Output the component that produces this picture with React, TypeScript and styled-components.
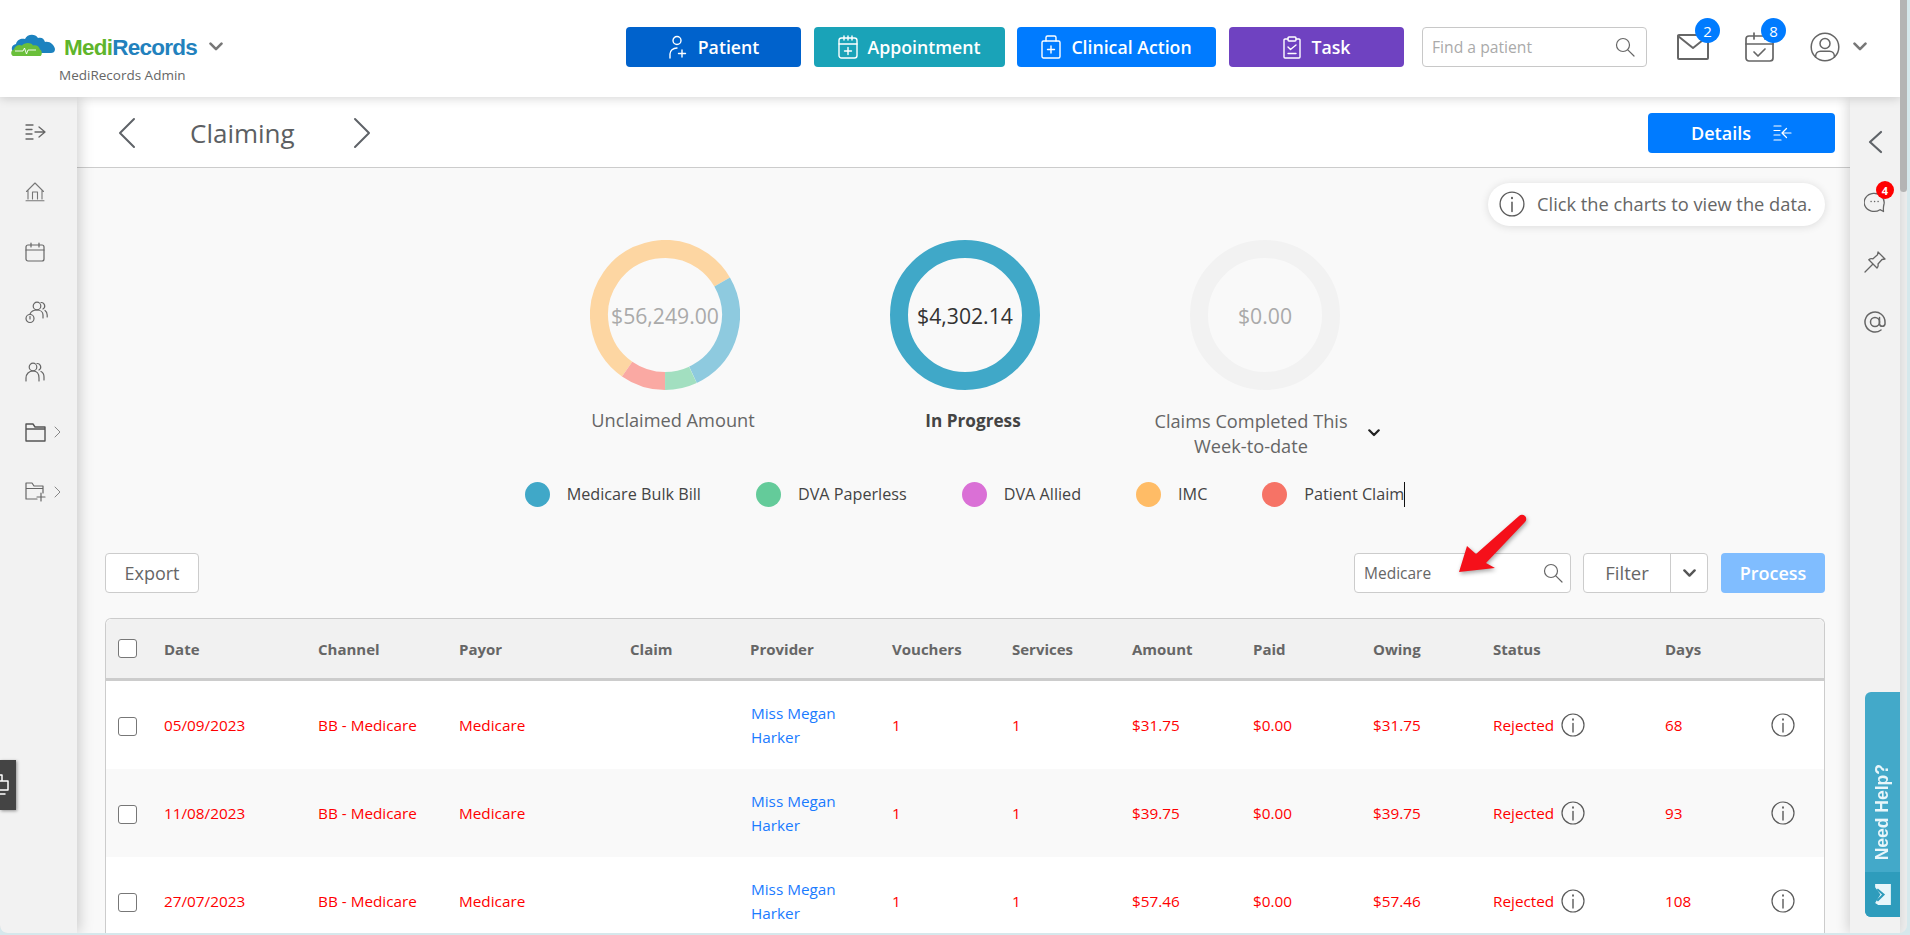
import styled, { createGlobalStyle } from "styled-components";
import { ReactNode } from "react";

const GlobalStyle = createGlobalStyle`
  html, body {
    margin: 0;
    padding: 0;
    height: 100%;
    overflow: hidden;
    background: #d6e8ec;
  }
  * { box-sizing: border-box; }
  #root { height: 100%; }
`;

const FONT = `"Open Sans", "Noto Sans", sans-serif`;

const Shell = styled.div`
  width: 1907px;
  height: 933px;
  display: flex;
  flex-direction: column;
  overflow: hidden;
  position: relative;
  background: #eeeeee;
  border-radius: 0 0 8px 8px;
  font-family: ${FONT};
  color: #666;
`;
const ScrollThumb = styled.div`
  position: absolute;
  top: 0;
  right: 0;
  width: 7px;
  height: 192px;
  background: #b4b4b4;
  border-radius: 0 0 4px 4px;
  z-index: 5;
`;
const Header = styled.header`
  width: 1900px;
  height: 97px;
  flex: none;
  display: flex;
  align-items: flex-start;
  padding-top: 27px;
  background: #fff;
  box-shadow: 0 1px 10px rgba(0, 0, 0, 0.18);
  position: relative;
  z-index: 3;
`;
const Brand = styled.div`
  width: 626px;
  flex: none;
  padding: 6px 0 0 11px;
  display: flex;
  flex-direction: column;
`;
const BrandTop = styled.div`
  display: flex;
  align-items: center;
  height: 24px;
`;
const BrandName = styled.div`
  margin: 5px 0 0 9px;
  font-family: "Liberation Sans", Arial, sans-serif;
  font-weight: 700;
  font-size: 22.500px;
  letter-spacing: -0.75px;
  line-height: 24px;
  color: #2281bd;
  span { color: #5fb52c; }
`;
const BrandCaret = styled.div`
  margin: 4px 0 0 12px;
`;
const BrandSub = styled.div`
  margin: 9px 0 0 48px;
  font-size: 13.500px;
  line-height: 18px;
  color: #666;
`;
const ActionButton = styled.button<{ $bg: string; $w: number }>`
  width: ${(p) => p.$w}px;
  height: 40px;
  margin-right: 12.500px;
  flex: none;
  display: flex;
  align-items: center;
  justify-content: center;
  gap: 10px;
  border: 0;
  border-radius: 4px;
  background: ${(p) => p.$bg};
  color: #fff;
  font-family: ${FONT};
  font-size: 17.700px;
  font-weight: 600;
`;
const FindBox = styled.div`
  width: 225px;
  height: 40px;
  margin-left: 6px;
  flex: none;
  display: flex;
  align-items: center;
  justify-content: space-between;
  padding: 0 11px 0 9px;
  background: #fff;
  border: 1px solid #c8c8c8;
  border-radius: 4px;
  font-size: 15.700px;
  color: #aaa;
`;
const HeaderIcon = styled.div<{ $ml: number }>`
  position: relative;
  margin-left: ${(p) => p.$ml}px;
  height: 40px;
  display: flex;
  align-items: center;
`;
const CountBadge = styled.span`
  position: absolute;
  width: 25px;
  height: 25px;
  top: -9px;
  right: -11px;
  border-radius: 50%;
  background: #007bff;
  color: #fff;
  font-size: 15px;
  font-weight: 500;
  display: flex;
  align-items: center;
  justify-content: center;
`;
const Body = styled.div`
  flex: 1;
  min-height: 0;
  display: flex;
  width: 1907px;
`;
const SideBar = styled.nav`
  width: 77px;
  flex: none;
  padding-top: 5px;
  background: #f2f2f2;
  box-shadow: 2px 0 14px rgba(0, 0, 0, 0.2);
  position: relative;
  z-index: 2;
`;
const SideItem = styled.div`
  height: 60px;
  display: flex;
  align-items: center;
  padding-left: 25px;
  gap: 8px;
`;
const RemoteTab = styled.div`
  position: absolute;
  left: 0;
  top: 663px;
  width: 16px;
  height: 50px;
  background: #444;
  box-shadow: 1px 1px 3px rgba(0, 0, 0, 0.4);
  overflow: hidden;
  display: flex;
  align-items: center;
`;
const Main = styled.main`
  width: 1773px;
  flex: none;
  min-height: 0;
  overflow: hidden;
  background: #f9f9f9;
`;
const PageBar = styled.div`
  height: 71px;
  display: flex;
  align-items: center;
  padding: 2px 15px 0 41px;
  background: #fff;
  border-bottom: 1px solid #ccc;
`;
const PageTitle = styled.h1`
  width: 217px;
  margin: 0;
  padding-left: 54px;
  font-size: 26px;
  font-weight: 400;
  color: #5c5f63;
`;
const DetailsButton = styled.button`
  width: 187px;
  height: 40px;
  margin-left: auto;
  display: flex;
  align-items: center;
  justify-content: center;
  gap: 22px;
  border: 0;
  border-radius: 4px;
  background: #007bff;
  color: #fff;
  font-family: ${FONT};
  font-size: 18px;
  font-weight: 600;
`;
const Content = styled.div`
  padding: 15px 25px 0 28px;
`;
const HintRow = styled.div`
  display: flex;
  justify-content: flex-end;
`;
const Hint = styled.div`
  width: 337px;
  height: 43px;
  display: flex;
  align-items: center;
  gap: 12px;
  padding: 0 0 2px 11px;
  border-radius: 22px;
  background: #fff;
  box-shadow: 0 1px 8px rgba(0, 0, 0, 0.12);
  font-size: 18.300px;
  white-space: nowrap;
  color: #666;
`;
const Charts = styled.div`
  display: flex;
  justify-content: center;
  margin-top: 14px;
`;
const ChartCol = styled.div`
  width: 300px;
  display: flex;
  flex-direction: column;
  align-items: center;
`;
const DonutWrap = styled.div`
  position: relative;
  width: 150px;
  height: 150px;
`;
const DonutValue = styled.div<{ $dark?: boolean }>`
  position: absolute;
  inset: 0;
  display: flex;
  align-items: center;
  justify-content: center;
  font-size: 21.200px;
  color: ${(p) => (p.$dark ? "#333" : "#aaa")};
`;
const ChartLabel = styled.div<{ $bold?: boolean }>`
  margin: 18px 0 0 16px;
  font-size: ${(p) => (p.$bold ? 17.2 : 18.2)}px;
  line-height: 25px;
  font-weight: ${(p) => (p.$bold ? 700 : 400)};
  color: ${(p) => (p.$bold ? "#444" : "#666")};
`;
const WeekLabel = styled.div`
  position: relative;
  margin: 19px 0 0 -28px;
  width: 210px;
  text-align: center;
  font-size: 18.200px;
  line-height: 25px;
  color: #666;
  svg {
    position: absolute;
    right: -24px;
    top: 20px;
  }
`;
const Legend = styled.div`
  display: flex;
  justify-content: center;
  gap: 55px;
  margin-top: 23px;
`;
const LegendItem = styled.div`
  display: flex;
  align-items: center;
  gap: 17px;
  height: 25px;
  font-size: 16.200px;
  color: #444;
`;
const LegendDot = styled.span<{ $c: string }>`
  width: 25px;
  height: 25px;
  border-radius: 50%;
  background: ${(p) => p.$c};
`;
const LegendText = styled.span<{ $caret?: boolean }>`
  line-height: 25px;
  ${(p) => (p.$caret ? "border-right: 1px solid #111;" : "")}
`;
const Toolbar = styled.div`
  display: flex;
  align-items: center;
  margin-top: 46px;
  height: 40px;
`;
const ExportButton = styled.button`
  width: 94px;
  height: 40px;
  background: #fff;
  border: 1px solid #ccc;
  border-radius: 4px;
  font-family: ${FONT};
  font-size: 18px;
  color: #666;
`;
const SearchBox = styled.div`
  position: relative;
  width: 217px;
  height: 40px;
  margin-left: auto;
  display: flex;
  align-items: center;
  justify-content: space-between;
  padding: 0 7px 0 9px;
  background: #fff;
  border: 1px solid #ccc;
  border-radius: 4px;
  font-size: 15.500px;
  color: #666;
`;
const ArrowMark = styled.svg`
  position: absolute;
  left: 95px;
  top: -43px;
  filter: drop-shadow(1px 2px 2px rgba(0, 0, 0, 0.35));
`;
const FilterBox = styled.div`
  width: 125px;
  height: 40px;
  margin-left: 12px;
  display: flex;
  align-items: center;
  background: #fff;
  border: 1px solid #ccc;
  border-radius: 4px;
  font-size: 18.500px;
  color: #666;
`;
const FilterLabel = styled.span`
  width: 87px;
  height: 38px;
  display: flex;
  align-items: center;
  justify-content: center;
  padding-bottom: 1px;
  border-right: 1px solid #ccc;
`;
const FilterCaret = styled.span`
  flex: 1;
  display: flex;
  justify-content: center;
`;
const ProcessButton = styled.button`
  width: 104px;
  height: 40px;
  margin-left: 13px;
  border: 0;
  border-radius: 4px;
  background: #80bdff;
  color: #fff;
  font-family: ${FONT};
  font-size: 18px;
  font-weight: 600;
`;
const Table = styled.div`
  margin-top: 25px;
  background: #fff;
  border: 1px solid #ccc;
  border-bottom: 0;
  border-radius: 6px 6px 0 0;
  font-size: 15.300px;
`;
const COLUMNS = "58px 154px 141px 171px 120px 142px 120px 120px 121px 120px 120px 172px 1fr";
const HeadRow = styled.div`
  display: grid;
  grid-template-columns: ${COLUMNS};
  align-items: center;
  height: 62px;
  background: #f1f1f1;
  border-bottom: 3px solid #ccc;
  border-radius: 6px 6px 0 0;
  font-size: 15px;
  font-weight: 700;
  color: #666;
`;
const Row = styled.div<{ $alt?: boolean }>`
  display: grid;
  grid-template-columns: ${COLUMNS};
  align-items: center;
  height: 88px;
  background: ${(p) => (p.$alt ? "#f9f9f9" : "#fff")};
  color: #ff0000;
`;
const CheckCell = styled.div`
  padding-left: 12px;
`;
const CheckBox = styled.span<{ $nudge?: boolean }>`
  display: block;
  width: 19px;
  height: 19px;
  margin-top: ${(p) => (p.$nudge ? 2 : 0)}px;
  background: #fff;
  border: 1px solid #777;
  border-radius: 3px;
`;
const Provider = styled.a`
  display: block;
  width: 100px;
  margin-left: 1px;
  line-height: 24px;
  color: #1a7bff;
`;
const StatusCell = styled.div`
  display: flex;
  align-items: center;
  gap: 7px;
`;
const ActionCell = styled.div`
  display: flex;
  align-items: center;
  justify-content: space-between;
  padding-right: 29px;
`;
const RightRail = styled.aside`
  width: 50px;
  flex: none;
  padding-top: 15px;
  background: #f2f2f2;
  box-shadow: -2px 0 12px rgba(0, 0, 0, 0.16);
  position: relative;
  z-index: 2;
`;
const RailItem = styled.div`
  position: relative;
  height: 60px;
  display: flex;
  align-items: center;
  justify-content: center;
`;
const RedBadge = styled.span`
  position: absolute;
  top: 9px;
  right: 6px;
  width: 18px;
  height: 18px;
  border-radius: 50%;
  background: #f00;
  color: #fff;
  font-size: 11px;
  font-weight: 700;
  display: flex;
  align-items: center;
  justify-content: center;
`;
const HelpTab = styled.div`
  position: absolute;
  left: 15px;
  top: 595px;
  width: 35px;
  height: 225px;
  display: flex;
  flex-direction: column;
  border-radius: 6px 0 0 6px;
  overflow: hidden;
  background: #43a9c9;
`;
const HelpLabel = styled.div`
  flex: 1;
  display: flex;
  align-items: flex-end;
  justify-content: center;
  padding-bottom: 12px;
  span {
    writing-mode: vertical-rl;
    transform: rotate(180deg);
    font-family: "Liberation Sans", Arial, sans-serif;
    font-size: 17.500px;
    font-weight: 700;
    color: #e8f6fa;
  }
`;
const HelpFoot = styled.div`
  height: 45px;
  display: flex;
  align-items: center;
  justify-content: center;
  background: #2e9cbc;
`;

const Line = styled.svg.attrs({ fill: "none", strokeLinecap: "round", strokeLinejoin: "round" })`
  display: block;
  flex: none;
`;

type IconProps = { c?: string; w?: number };

const IconPerson = ({ c = "#fff" }: IconProps) => (
  <Line width="20" height="24" viewBox="0 0 20 24" stroke={c} strokeWidth="1.4">
    <circle cx="9" cy="5.5" r="4" />
    <path d="M2 23v-4c0-3.5 3-6 7-6M14 15v7M10.5 18.5h7" />
  </Line>
);
const IconCalPlus = ({ c = "#fff" }: IconProps) => (
  <Line width="20" height="24" viewBox="0 0 20 24" stroke={c} strokeWidth="1.4">
    <rect x="1" y="3" width="18" height="20" rx="2.5" />
    <path d="M1 9h18M6 1v4M10 1v4M14 1v4M10 12.5v7M6.5 16h7" />
  </Line>
);
const IconCase = ({ c = "#fff" }: IconProps) => (
  <Line width="20" height="24" viewBox="0 0 20 24" stroke={c} strokeWidth="1.4">
    <rect x="1" y="6" width="18" height="17" rx="1.5" />
    <path d="M5 6V2.5A1.5 1.5 0 0 1 6.5 1h7A1.5 1.5 0 0 1 15 2.5V6M10 11v7M6.500 14.500h7" />
  </Line>
);
const IconClipboard = ({ c = "#fff" }: IconProps) => (
  <Line width="20" height="24" viewBox="0 0 20 24" stroke={c} strokeWidth="1.4">
    <path d="M6 4H3a1 1 0 0 0-1 1v17a1 1 0 0 0 1 1h14a1 1 0 0 0 1-1V5a1 1 0 0 0-1-1h-3" />
    <rect x="6" y="2" width="8" height="4" rx="1" />
    <path d="M6 12l2.500 2.500L14 10M6 18.500h8" />
  </Line>
);
const IconSearch = () => (
  <Line width="20" height="20" viewBox="0 0 20 20" stroke="#666" strokeWidth="1.2">
    <circle cx="8" cy="8" r="6.500" />
    <path d="M12.800 12.800L19 19" />
  </Line>
);
const IconMail = () => (
  <Line width="32" height="26" viewBox="0 0 32 26" stroke="#666" strokeWidth="2">
    <rect x="1" y="1" width="30" height="24" rx="1" />
    <path d="M1 2l15 12L31 2" />
  </Line>
);
const IconCalCheck = () => (
  <Line width="30" height="30" viewBox="0 0 30 30" stroke="#666" strokeWidth="1.700">
    <rect x="1" y="4" width="27" height="25" rx="3" />
    <path d="M1 12h27M9 1v6M20 1v6M9 20l4 4 7-7" />
  </Line>
);
const IconUser = () => (
  <Line width="30" height="30" viewBox="0 0 30 30" stroke="#666" strokeWidth="1.500">
    <circle cx="15" cy="15" r="13.800" />
    <circle cx="15" cy="11.500" r="5" />
    <path d="M5.500 25c0-4 2.500-5.800 5-5.800h9c2.500 0 5 1.800 5 5.800" />
  </Line>
);
const IconChevDown = ({ c = "#777", w = 14 }: IconProps) => (
  <Line width={w} height={w * 0.65} viewBox="0 0 14 9" stroke={c} strokeWidth="2.600">
    <path d="M1.500 1.500L7 7l5.500-5.500" />
  </Line>
);
const IconNav = ({ dir }: { dir: "left" | "right" }) => (
  <Line width="18" height="32" viewBox="0 0 18 32" stroke="#5f6368" strokeWidth="2">
    <path d={dir === "left" ? "M16 2L2 16l14 14" : "M2 2l14 14L2 30"} />
  </Line>
);
const IconRailBack = () => (
  <Line width="15" height="24" viewBox="0 0 15 24" stroke="#5f6368" strokeWidth="2.200">
    <path d="M13 2L2 12l11 10" />
  </Line>
);
const IconExpand = ({ c = "#666" }: IconProps) => (
  <Line width="21" height="18" viewBox="0 0 21 18" stroke={c} strokeWidth="1.300">
    <path d="M1 2h7M1 6.500h6M1 11h6M1 16h7M10 9h10M14 4l6 5-6 5" />
  </Line>
);
const IconCollapse = () => (
  <Line width="19" height="16" viewBox="0 0 19 16" stroke="#fff" strokeWidth="1.200">
    <path d="M1 1h7M1 5.500h6M1 10h6M1 15h7M9 8h9M13.500 3.500L9 8l4.500 4.500" />
  </Line>
);
const IconHome = () => (
  <Line width="20" height="20" viewBox="0 0 20 20" stroke="#777" strokeWidth="1.100">
    <path d="M10 1L1.500 9.500M10 1l8.500 8.500M3 8.500V17M17 8.500V17M1 18.800h18M7.500 17v-7h5v7" />
  </Line>
);
const IconCal = () => (
  <Line width="20" height="20" viewBox="0 0 20 20" stroke="#666" strokeWidth="1.200">
    <rect x="1" y="3" width="18" height="16" rx="2" />
    <path d="M1 8h18M6 1v4M14 1v4" />
  </Line>
);
const IconUsersClock = () => (
  <Line width="23" height="23" viewBox="0 0 23 23" stroke="#666" strokeWidth="1.200">
    <circle cx="12" cy="5" r="3.800" />
    <path d="M16 1.500a3.500 3.500 0 0 1 2 6.500M5 13c1-2.500 3.500-4 7-4s6 2 6 5v3M20 9.500c1.500 1 2.200 2.500 2.200 4.500v2" />
    <circle cx="5" cy="17.500" r="4" />
    <path d="M5 15.500v2.500" />
  </Line>
);
const IconUsers = () => (
  <Line width="20" height="20" viewBox="0 0 20 20" stroke="#666" strokeWidth="1.200">
    <circle cx="8" cy="5" r="3.800" />
    <path d="M12 1.500a3.500 3.500 0 0 1 2 6.500M1 19v-3c0-4 3-7 7-7s6 3 6 7v3M16 9.500c2 1 3 3 3 5.500v3" />
  </Line>
);
const IconFolder = () => (
  <Line width="21" height="20" viewBox="0 0 21 20" stroke="#555" strokeWidth="1.400">
    <path d="M1 19V2h7l2 3h10v14zM1 7h19" />
  </Line>
);
const IconFolderPlus = () => (
  <Line width="21" height="20" viewBox="0 0 21 20" stroke="#666" strokeWidth="1.200">
    <path d="M12 17H1V1h6l2 3h9v7M1 6.500h17M16 11v8M12 15h8" />
  </Line>
);
const IconSmallChev = () => (
  <Line width="7" height="12" viewBox="0 0 7 12" stroke="#888" strokeWidth="1">
    <path d="M1 1l5 5-5 5" />
  </Line>
);
const IconInfo = ({ w = 24 }: IconProps) => (
  <Line width={w} height={w} viewBox="0 0 24 24" stroke="#5a5a5a" strokeWidth="1.200">
    <circle cx="12" cy="12" r="11" />
    <path d="M12 10.500V19" strokeWidth="1.400" />
    <path d="M12 6.200v.6" strokeWidth="1.800" />
  </Line>
);
const IconChat = () => (
  <Line width="22" height="22" viewBox="0 0 22 22" stroke="#666" strokeWidth="1.300">
    <path d="M19.500 20.500l-3.500-1.800A10 9 0 1 1 20 13c-.5 2-.8 5 -.5 7.500z" />
    <path d="M7 10.500h.2M10.500 10.500h.2M14 10.500h.2" />
  </Line>
);
const IconPin = () => (
  <Line width="22" height="22" viewBox="0 0 22 22" stroke="#666" strokeWidth="1.300">
    <path d="M14 1l7 7-3 .5-4 4.500c.5 2-.5 3.500-1 4L4.800 8.800c1-1 2.500-1.500 4.200-1l4.500-4z" />
    <path d="M8.500 13.500L1 21" />
  </Line>
);
const IconAt = () => (
  <Line width="22" height="22" viewBox="0 0 22 22" stroke="#666" strokeWidth="1.500">
    <circle cx="11" cy="11" r="4.500" />
    <path d="M15.500 6.500V13a2.800 2.800 0 0 0 5.500 0v-2a10 10 0 1 0-4 8" />
  </Line>
);

const CloudLogo = () => (
  <svg width="44" height="24" viewBox="0 0 44 24">
    <path
      d="M3 19c-3-1-3.500-7 2-8 1-5 6-6 9-5 2-5 10-6 13-1 3-1 6 0 7 4 5-1 9 3 10 7 0 3-2 4-4 4H6c-1 0-2-.5-3-1z"
      fill="#1c82bf"
    />
    <path
      d="M2 23c-2.500-1-2.500-6 1-6.500 1-4 5-5.500 8-4 2-3 9-3.500 11 0 3-1 6 .5 7 4 2 .5 2.500 5 .5 6.500z"
      fill="#6abf3a"
    />
    <path d="M4 18h8l1.500-3 2 6 1.500-4h8" fill="none" stroke="#fff" strokeWidth="0.900" />
  </svg>
);

const RemoteIcon = () => (
  <Line width="10" height="24" viewBox="0 0 10 24" stroke="#fff" strokeWidth="1.500">
    <path d="M-2 2h4v6M-2 8h10v9H-2zM-2 21h7" />
  </Line>
);

const HelpIcon = () => (
  <svg width="16" height="21" viewBox="0 0 15 20">
    <path d="M0 0h15v20H3l-3-2 5-8-5-7z" fill="#e8f6fa" />
    <path d="M2 5l6 5-6 6" fill="none" stroke="#2e9cbc" strokeWidth="2" />
  </svg>
);

type Segment = { color: string; from: number; to: number };

// from/to are degrees clockwise from 12 o'clock
function Donut({ segments, children }: { segments: Segment[]; children: ReactNode }) {
  return (
    <DonutWrap>
      <svg width="150" height="150" viewBox="0 0 150 150">
        {segments.map((s, i) => (
          <circle
            key={i}
            cx="75"
            cy="75"
            r="66"
            fill="none"
            stroke={s.color}
            strokeWidth="18"
            pathLength={360}
            strokeDasharray={`${s.to - s.from} ${360 - (s.to - s.from)}`}
            transform={`rotate(${s.from - 90} 75 75)`}
          />
        ))}
      </svg>
      {children}
    </DonutWrap>
  );
}

const unclaimed: Segment[] = [
  { color: "#fdd6a2", from: -145, to: 60 },
  { color: "#8ecadf", from: 60, to: 155 },
  { color: "#a2dfc0", from: 155, to: 180 },
  { color: "#faa9a3", from: 180, to: 215 },
];

const legend = [
  { label: "Medicare Bulk Bill", color: "#40a8c8" },
  { label: "DVA Paperless", color: "#64cb9a" },
  { label: "DVA Allied", color: "#da70d6" },
  { label: "IMC", color: "#ffbc66" },
  { label: "Patient Claim", color: "#f67366" },
];

const columns = ["Date", "Channel", "Payor", "Claim", "Provider", "Vouchers", "Services", "Amount", "Paid", "Owing", "Status", "Days"];

const rows = [
  { date: "05/09/2023", amount: "$31.75", days: "68" },
  { date: "11/08/2023", amount: "$39.75", days: "93" },
  { date: "27/07/2023", amount: "$57.46", days: "108" },
];

export default function App() {
  return (
    <>
      <GlobalStyle />
      <Shell>
        <ScrollThumb />
        <Header>
          <Brand>
            <BrandTop>
              <CloudLogo />
              <BrandName>
                <span>Medi</span>Records
              </BrandName>
              <BrandCaret>
                <IconChevDown />
              </BrandCaret>
            </BrandTop>
            <BrandSub>MediRecords Admin</BrandSub>
          </Brand>
          <ActionButton $bg="#0062cc" $w={175}>
            <IconPerson /> Patient
          </ActionButton>
          <ActionButton $bg="#1aa3b8" $w={191}>
            <IconCalPlus /> Appointment
          </ActionButton>
          <ActionButton $bg="#007bff" $w={199}>
            <IconCase /> Clinical Action
          </ActionButton>
          <ActionButton $bg="#6f42c1" $w={175}>
            <IconClipboard /> Task
          </ActionButton>
          <FindBox>
            Find a patient
            <IconSearch />
          </FindBox>
          <HeaderIcon $ml={30}>
            <IconMail />
            <CountBadge>2</CountBadge>
          </HeaderIcon>
          <HeaderIcon $ml={36}>
            <IconCalCheck />
            <CountBadge>8</CountBadge>
          </HeaderIcon>
          <HeaderIcon $ml={35}>
            <IconUser />
          </HeaderIcon>
          <HeaderIcon $ml={13}>
            <IconChevDown />
          </HeaderIcon>
        </Header>
        <Body>
          <SideBar>
            <SideItem>
              <IconExpand />
            </SideItem>
            <SideItem>
              <IconHome />
            </SideItem>
            <SideItem>
              <IconCal />
            </SideItem>
            <SideItem>
              <IconUsersClock />
            </SideItem>
            <SideItem>
              <IconUsers />
            </SideItem>
            <SideItem>
              <IconFolder />
              <IconSmallChev />
            </SideItem>
            <SideItem>
              <IconFolderPlus />
              <IconSmallChev />
            </SideItem>
            <RemoteTab>
              <RemoteIcon />
            </RemoteTab>
          </SideBar>
          <Main>
            <PageBar>
              <IconNav dir="left" />
              <PageTitle>Claiming</PageTitle>
              <IconNav dir="right" />
              <DetailsButton>
                Details
                <IconCollapse />
              </DetailsButton>
            </PageBar>
            <Content>
              <HintRow>
                <Hint>
                  <IconInfo w={26} />
                  Click the charts to view the data.
                </Hint>
              </HintRow>
              <Charts>
                <ChartCol>
                  <Donut segments={unclaimed}>
                    <DonutValue>$56,249.00</DonutValue>
                  </Donut>
                  <ChartLabel>Unclaimed Amount</ChartLabel>
                </ChartCol>
                <ChartCol>
                  <Donut segments={[{ color: "#40a8c8", from: 0, to: 360 }]}>
                    <DonutValue $dark>$4,302.14</DonutValue>
                  </Donut>
                  <ChartLabel $bold>In Progress</ChartLabel>
                </ChartCol>
                <ChartCol>
                  <Donut segments={[{ color: "#f2f2f2", from: 0, to: 360 }]}>
                    <DonutValue>$0.00</DonutValue>
                  </Donut>
                  <WeekLabel>
                    Claims Completed This Week-to-date
                    <IconChevDown c="#222" w={12} />
                  </WeekLabel>
                </ChartCol>
              </Charts>
              <Legend>
                {legend.map((l, i) => (
                  <LegendItem key={l.label}>
                    <LegendDot $c={l.color} />
                    <LegendText $caret={i === legend.length - 1}>{l.label}</LegendText>
                  </LegendItem>
                ))}
              </Legend>
              <Toolbar>
                <ExportButton>Export</ExportButton>
                <SearchBox>
                  Medicare
                  <IconSearch />
                  <ArrowMark width="80" height="70" viewBox="0 0 80 70">
                    <path d="M9 61L17 35 26 43 69 5a4 4 0 0 1 6 6L36 52l9 5z" fill="#f5101a" />
                  </ArrowMark>
                </SearchBox>
                <FilterBox>
                  <FilterLabel>Filter</FilterLabel>
                  <FilterCaret>
                    <IconChevDown c="#555" w={13} />
                  </FilterCaret>
                </FilterBox>
                <ProcessButton>Process</ProcessButton>
              </Toolbar>
              <Table>
                <HeadRow>
                  <CheckCell>
                    <CheckBox />
                  </CheckCell>
                  {columns.map((c) => (
                    <div key={c}>{c}</div>
                  ))}
                </HeadRow>
                {rows.map((r, i) => (
                  <Row key={r.date} $alt={i === 1}>
                    <CheckCell>
                      <CheckBox $nudge />
                    </CheckCell>
                    <div>{r.date}</div>
                    <div>BB - Medicare</div>
                    <div>Medicare</div>
                    <div />
                    <Provider>Miss Megan Harker</Provider>
                    <div>1</div>
                    <div>1</div>
                    <div>{r.amount}</div>
                    <div>$0.00</div>
                    <div>{r.amount}</div>
                    <StatusCell>
                      Rejected
                      <IconInfo />
                    </StatusCell>
                    <ActionCell>
                      <span>{r.days}</span>
                      <IconInfo />
                    </ActionCell>
                  </Row>
                ))}
              </Table>
            </Content>
          </Main>
          <RightRail>
            <RailItem>
              <IconRailBack />
            </RailItem>
            <RailItem>
              <IconChat />
              <RedBadge>4</RedBadge>
            </RailItem>
            <RailItem>
              <IconPin />
            </RailItem>
            <RailItem>
              <IconAt />
            </RailItem>
            <HelpTab>
              <HelpLabel>
                <span>Need Help?</span>
              </HelpLabel>
              <HelpFoot>
                <HelpIcon />
              </HelpFoot>
            </HelpTab>
          </RightRail>
        </Body>
      </Shell>
    </>
  );
}
